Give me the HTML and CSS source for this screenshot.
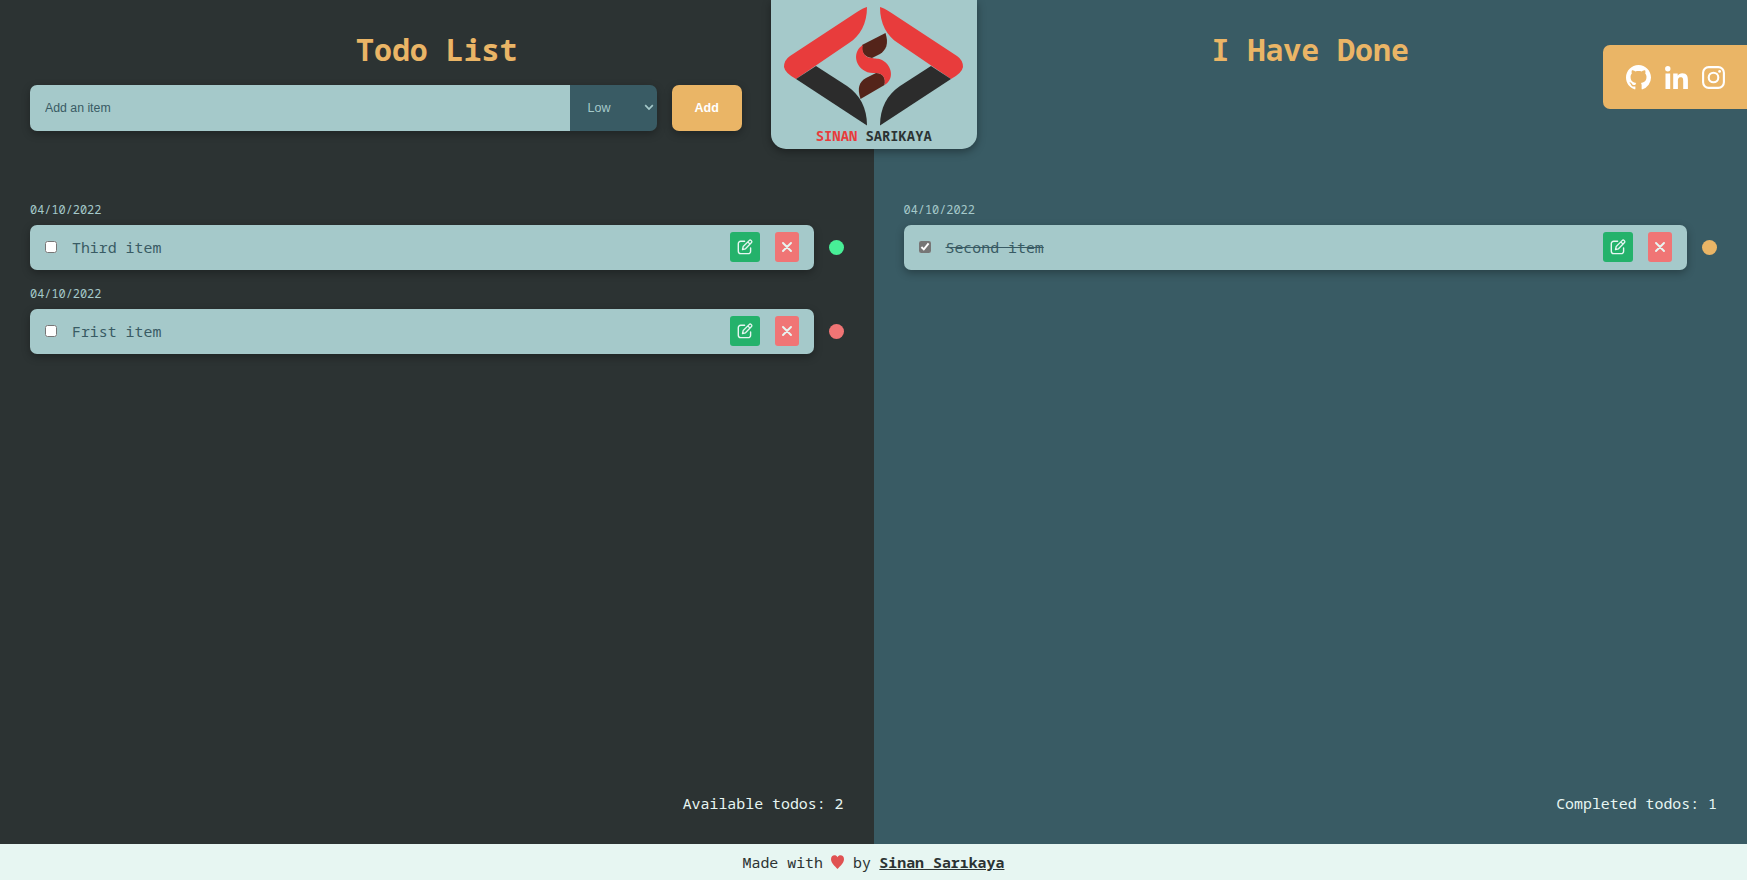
FILE: index.html
```html
<!DOCTYPE html>
<html lang="en">
<head>
<meta charset="utf-8">
<title>Todo List</title>
<link rel="stylesheet" href="styles.css">
</head>
<body>
<svg width="0" height="0" class="sprite">
  <symbol id="edit" viewBox="0 0 16 16">
    <path d="M7.600 2.300H3.700A2.400 2.400 0 0 0 1.300 4.700v7.500a2.400 2.400 0 0 0 2.400 2.400h7.500a2.400 2.400 0 0 0 2.400-2.400V9" fill="none" stroke="currentColor" stroke-width="1.400" stroke-linecap="round"/>
    <path d="M5.500 10.500l.7-3L12.100 1.600a1.500 1.500 0 0 1 2.200 2.200L8.500 9.800zM10.800 2.900l2.300 2.300" fill="none" stroke="currentColor" stroke-width="1.300" stroke-linejoin="round"/>
  </symbol>
  <symbol id="cross" viewBox="0 0 10 10">
    <path d="M1 1l8 8M9 1L1 9" fill="none" stroke="currentColor" stroke-width="1.900" stroke-linecap="round"/>
  </symbol>
</svg>
<main class="board">
  <section class="panel panel-todo">
    <h1 class="title">Todo List</h1>
    <form class="add-form">
      <div class="field">
        <input class="field-input" type="text" placeholder="Add an item">
        <div class="select-wrap">
          <span>Low</span>
          <svg width="10" height="7" viewBox="0 0 10 7"><path d="M1.200 1.200L5 5l3.800-3.800" fill="none" stroke="currentColor" stroke-width="1.700"/></svg>
        </div>
      </div>
      <button class="add-button" type="button">Add</button>
    </form>
    <div class="list">
      <div class="entry">
        <p class="date">04/10/2022</p>
        <div class="row">
          <div class="card">
            <input class="check" type="checkbox"><span class="text">Third item</span>
            <button class="btn edit" type="button"><svg width="16" height="16"><use href="#edit"/></svg></button>
            <button class="btn delete" type="button"><svg width="10" height="10"><use href="#cross"/></svg></button>
          </div>
          <span class="dot low"></span>
        </div>
      </div>
      <div class="entry">
        <p class="date">04/10/2022</p>
        <div class="row">
          <div class="card">
            <input class="check" type="checkbox"><span class="text">Frist item</span>
            <button class="btn edit" type="button"><svg width="16" height="16"><use href="#edit"/></svg></button>
            <button class="btn delete" type="button"><svg width="10" height="10"><use href="#cross"/></svg></button>
          </div>
          <span class="dot high"></span>
        </div>
      </div>
    </div>
    <p class="count">Available todos: 2</p>
  </section>
  <section class="panel panel-done">
    <h1 class="title">I Have Done</h1>
    <div class="form-space"></div>
    <div class="list">
      <div class="entry">
        <p class="date">04/10/2022</p>
        <div class="row">
          <div class="card">
            <input class="check" type="checkbox" checked><span class="text struck">Second item</span>
            <button class="btn edit" type="button"><svg width="16" height="16"><use href="#edit"/></svg></button>
            <button class="btn delete" type="button"><svg width="10" height="10"><use href="#cross"/></svg></button>
          </div>
          <span class="dot medium"></span>
        </div>
      </div>
    </div>
    <p class="count">Completed todos: 1</p>
  </section>
</main>
<div class="logo">
  <svg width="181" height="120" viewBox="0 0 181 120">
    <path d="M84 0Q80 1 74 5L7 49Q1 53 1 60Q2 66 13 72L66 36C77 29 84 17 84 0Z" fill="#e83c3c"/>
    <path d="M13 72L33 59L64 79C77 88 84 101 84 118.500Z" fill="#2c2c2c"/>
    <path d="M97 0Q101 1 107 5L174 49Q180 53 180 60Q179 66 168 72L115 36C104 29 97 17 97 0Z" fill="#e83c3c"/>
    <path d="M168 72L148 59L117 79C104 88 97 101 97 118.500Z" fill="#2c2c2c"/>
    <path d="M102.500 26C106 37 103 43 97 47L89 51C82 50 78 46 79 38Z" fill="#54241a"/>
    <path d="M77.500 92C74 81 76 75 83 71L93 66C100 66 103 71 101.500 78Z" fill="#54241a"/>
    <path d="M80 38C78 45 82 51 89 51C92 52 96 51 99 53C110 59 111 73 101.500 78C103 71 100 66 93 66C89 66 85 66 82 64C71 58 70 44 80 38Z" fill="#e83c3c"/>
  </svg>
  <p class="logo-name"><span>SINAN</span> SARIKAYA</p>
</div>
<nav class="social">
  <svg width="25" height="25" viewBox="0 0 16 16"><path fill="currentColor" d="M8 0C3.580 0 0 3.580 0 8c0 3.540 2.290 6.530 5.470 7.590.4.070.55-.17.55-.38 0-.19-.010-.82-.010-1.490-2.010.37-2.530-.49-2.690-.94-.090-.23-.48-.94-.82-1.130-.28-.15-.68-.52-.010-.53.63-.010 1.080.58 1.230.82.72 1.210 1.870.87 2.330.66.070-.52.28-.87.51-1.070-1.780-.2-3.640-.89-3.640-3.950 0-.87.31-1.590.82-2.150-.080-.2-.36-1.020.080-2.120 0 0 .67-.21 2.200.82.64-.18 1.320-.27 2-.27s1.360.090 2 .27c1.530-1.040 2.200-.82 2.200-.82.44 1.100.16 1.920.080 2.120.51.56.82 1.270.82 2.150 0 3.070-1.870 3.750-3.650 3.950.29.25.54.73.54 1.480 0 1.070-.010 1.930-.010 2.200 0 .21.15.46.55.38A8 8 0 0 0 16 8c0-4.420-3.580-8-8-8z"/></svg>
  <svg width="23" height="23" viewBox="0 0 23 23"><g fill="currentColor"><circle cx="2.800" cy="2.800" r="2.700"/><path d="M.5 7.600h4.700V23H.5zM8.200 7.600h4.500v2.100c.8-1.500 2.400-2.500 4.600-2.500 4.700 0 5.600 3 5.600 7V23h-4.700v-7.600c0-1.900 0-4.100-2.500-4.100s-2.800 2-2.800 4V23H8.200z"/></g></svg>
  <svg width="23" height="23" viewBox="0 0 23 23"><rect x="1.100" y="1.100" width="20.800" height="20.800" rx="5.600" fill="none" stroke="currentColor" stroke-width="2.100"/><circle cx="11.500" cy="11.500" r="4.800" fill="none" stroke="currentColor" stroke-width="2.100"/><circle cx="17.600" cy="5.400" r="1.400" fill="currentColor"/></svg>
</nav>
<footer class="footer">
  <span>Made with</span>
  <svg width="13" height="14" viewBox="0 0 13 14"><path fill="#e05252" d="M6.500 2.200C7.200.8 8.300.2 9.500.2 11.500.2 13 1.800 13 4.200c0 3.600-4 7-6.500 9.800C4 11.200 0 7.800 0 4.200 0 1.800 1.500.2 3.500.2c1.200 0 2.300.6 3 2z"/></svg>
  <span>by</span>
  <a class="author">Sinan Sarıkaya</a>
</footer>
</body>
</html>
```
FILE: styles.css
```css
* { box-sizing: border-box; margin: 0; padding: 0; }
html { font-size: 15px; }
body {
  height: 880px;
  display: flex;
  flex-direction: column;
  font-family: "Noto Sans Mono", "Noto Mono", "DejaVu Sans Mono", "Liberation Mono", monospace;
  overflow: hidden;
}
.sprite { position: absolute; }
.board { flex: 1; display: grid; grid-template-columns: 1fr 1fr; }
.panel { display: flex; flex-direction: column; padding: 30px; }
.panel-todo { background: #2c3333; }
.panel-done { background: #395b64; }
.title { height: 40px; line-height: 40px; margin-bottom: 15px; text-align: center; font-size: 29.900px; color: #eab566; }
.add-form { display: flex; gap: 15px; height: 45.500px; width: 711.500px; }
.field { flex: 1; display: flex; border-radius: 7px; overflow: hidden; box-shadow: 0 3px 8px rgba(0,0,0,.3); }
.field-input { flex: 1; border: 0; padding: 0 15px; background: #a5c9ca; font: 12.300px "Liberation Sans", Arial, sans-serif; color: #395b64; }
.field-input::placeholder { color: #395b64; }
.select-wrap { width: 87.500px; display: flex; align-items: center; justify-content: space-between; padding: 0 3px 0 18px; background: #395b64; color: #a5c9ca; font: 12.500px "Liberation Sans", Arial, sans-serif; }
.add-button { width: 69.500px; border: 0; border-radius: 7px; background: #eab566; color: #fff; font: bold 12.500px "Liberation Sans", Arial, sans-serif; box-shadow: 0 3px 8px rgba(0,0,0,.3); }
.form-space { height: 45.500px; }
.list { flex: 1; margin-top: 70px; }
.entry { margin-bottom: 15px; }
.date { height: 17px; line-height: 17px; margin-bottom: 7.500px; font-size: 11.900px; color: #a5c9ca; }
.row { display: flex; align-items: center; gap: 15px; }
.card { flex: 1; display: flex; align-items: center; height: 44.500px; padding: 0 15px; background: #a5c9ca; border-radius: 7px; box-shadow: 0 3px 8px rgba(0,0,0,.3); }
.check { width: 12px; height: 12px; margin-right: 15px; accent-color: #767676; }
.text { flex: 1; font-size: 14.900px; line-height: 20px; color: #395b64; }
.struck { text-decoration: line-through; }
.btn { display: flex; align-items: center; justify-content: center; height: 30px; border: 0; border-radius: 3px; color: #e7f6f2; }
.edit { width: 30px; margin-right: 15px; background: #24b26b; }
.delete { width: 24px; background: #f07575; }
.dot { width: 15px; height: 15px; border-radius: 50%; }
.low { background: #48ef97; }
.medium { background: #eab566; }
.high { background: #f07575; }
.count { height: 21px; line-height: 20px; text-align: right; color: #e7f6f2; font-size: 14.900px; }
.logo { position: absolute; left: 771px; top: 0; width: 205.500px; height: 149px; padding-top: 7px; background: #a5c9ca; border-radius: 0 0 15px 15px; box-shadow: 0 3px 8px rgba(0,0,0,.35); text-align: center; }
.logo svg { display: block; margin: 0 auto; }
.logo-name { font-size: 13.800px; font-weight: bold; line-height: 18px; color: #2c3333; }
.logo-name span { color: #e83c3c; }
.social { position: absolute; right: 0; top: 45px; width: 144px; height: 64px; padding-left: 23px; display: flex; align-items: center; gap: 14px; background: #eab566; color: #fff; border-radius: 7px 0 0 7px; }
.footer { height: 36.500px; display: flex; align-items: center; justify-content: center; gap: 8.500px; background: #e7f6f2; color: #2c3333; font-size: 14.900px; }
.author { font-weight: bold; text-decoration: underline; }
```
